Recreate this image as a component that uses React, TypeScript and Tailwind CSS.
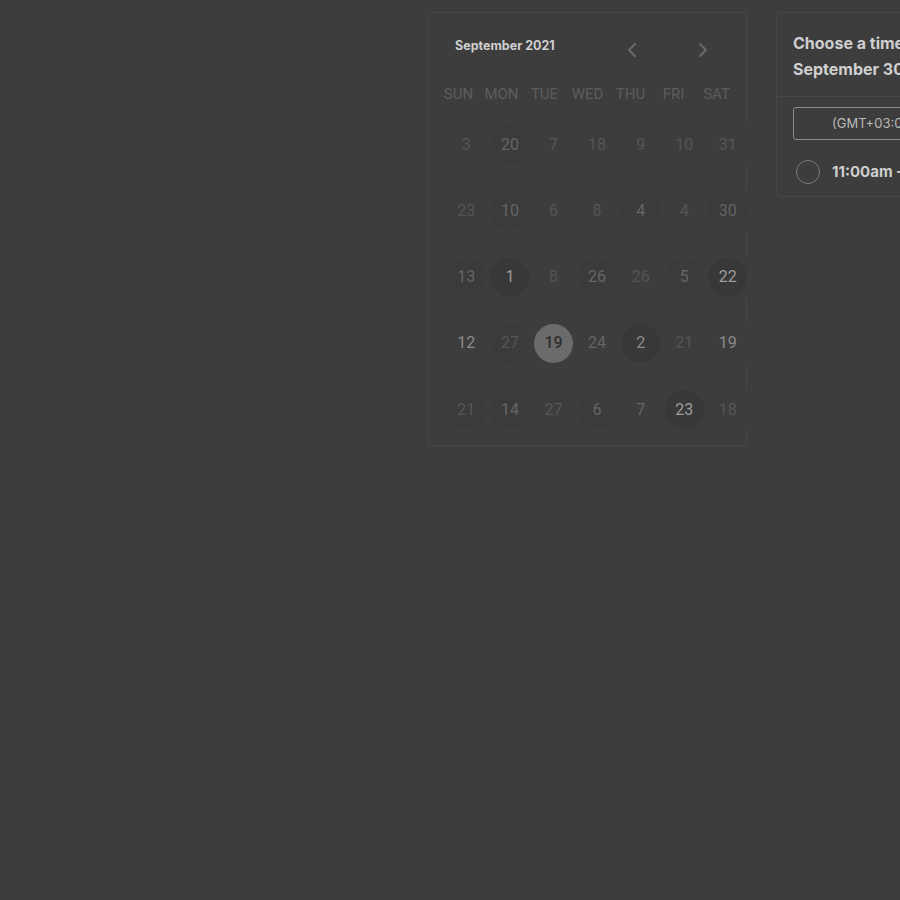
import React from "react";

type Day = { n: number; tone: string; ring?: boolean; dark?: boolean; selected?: boolean };

const HEADERS = ["SUN", "MON", "TUE", "WED", "THU", "FRI", "SAT"];

const dim = "text-[#555555]";
const mid = "text-[#656565]";
const bright = "text-[#8a8a8a]";
const brighter = "text-[#9c9c9c]";

const ROWS: Day[][] = [
  [
    { n: 3, tone: dim },
    { n: 20, tone: mid, ring: true },
    { n: 7, tone: dim },
    { n: 18, tone: dim },
    { n: 9, tone: dim },
    { n: 10, tone: dim },
    { n: 31, tone: dim },
  ],
  [
    { n: 23, tone: dim },
    { n: 10, tone: mid, ring: true },
    { n: 6, tone: dim },
    { n: 8, tone: dim },
    { n: 4, tone: mid, ring: true },
    { n: 4, tone: dim },
    { n: 30, tone: mid, ring: true },
  ],
  [
    { n: 13, tone: mid, ring: true },
    { n: 1, tone: brighter, ring: true, dark: true },
    { n: 8, tone: dim },
    { n: 26, tone: mid, ring: true },
    { n: 26, tone: dim },
    { n: 5, tone: mid, ring: true },
    { n: 22, tone: brighter, ring: true, dark: true },
  ],
  [
    { n: 12, tone: bright },
    { n: 27, tone: dim, ring: true },
    { n: 19, tone: "text-[#2f2f2f]", selected: true },
    { n: 24, tone: mid },
    { n: 2, tone: bright, ring: true, dark: true },
    { n: 21, tone: dim },
    { n: 19, tone: bright },
  ],
  [
    { n: 21, tone: dim, ring: true },
    { n: 14, tone: mid, ring: true },
    { n: 27, tone: dim },
    { n: 6, tone: mid, ring: true },
    { n: 7, tone: mid },
    { n: 23, tone: brighter, ring: true, dark: true },
    { n: 18, tone: dim },
  ],
];

function Chevron({ dir }: { dir: "left" | "right" }) {
  return (
    <svg width="10" height="16" viewBox="0 0 10 16" fill="none">
      <path
        d={dir === "left" ? "M8 2 L2 8 L8 14" : "M2 2 L8 8 L2 14"}
        stroke="#6a6a6a"
        strokeWidth="2"
        strokeLinecap="round"
        strokeLinejoin="round"
      />
    </svg>
  );
}

function DayCell({ day }: { day: Day }) {
  let circle = "";
  if (day.selected) circle = "bg-[#6b6b6b] font-medium";
  else if (day.dark) circle = "bg-[#383838]";
  else if (day.ring) circle = "bg-[#3b3b3b]";
  return (
    <div className="w-[43.6px] h-[42px] shrink-0 flex items-center justify-center bg-[#3d3d3d]">
      <div
        className={`w-[39px] h-[39px] shrink-0 rounded-full flex items-center justify-center text-[16px] ${circle} ${day.tone}`}
      >
        {day.n}
      </div>
    </div>
  );
}

export default function App() {
  return (
    <div
      className="w-full h-[900px] overflow-hidden bg-[#3d3d3d] flex items-start pl-[428px] pt-[12px] gap-[29px]"
      style={{ fontFamily: "Inter, Roboto, sans-serif" }}
    >
      {/* Calendar */}
      <div className="w-[319px] h-[434px] shrink-0 border border-[#474747] rounded-[2px]">
        <div className="flex items-center h-[58px] pl-[26px] pt-[8px]">
          <span className="text-[12.5px] font-bold text-[#cfcfcf] w-[172px]">September 2021</span>
          <div className="flex items-center gap-[61px] pt-[8px]">
            <Chevron dir="left" />
            <Chevron dir="right" />
          </div>
        </div>
        <div
          className="grid grid-cols-7 w-[301px] ml-[8px] mt-[12px] text-[15px] text-[#5c5c5c]"
          style={{ fontFamily: "Roboto, sans-serif" }}
        >
          {HEADERS.map((h) => (
            <div key={h} className="text-center">
              {h}
            </div>
          ))}
        </div>
        <div
          className="flex flex-col gap-[24.3px] ml-[15.5px] mt-[18px] w-[320px]"
          style={{ fontFamily: "Roboto, sans-serif" }}
        >
          {ROWS.map((row, i) => (
            <div key={i} className="flex">
              {row.map((d, j) => (
                <DayCell key={j} day={d} />
              ))}
            </div>
          ))}
        </div>
      </div>

      {/* Time picker */}
      <div className="w-[320px] h-[185px] shrink-0 border border-[#474747] rounded-[2px]">
        <div className="px-[16px] pt-[17px] pb-[14px] border-b border-[#474747] text-[16px] leading-[26px] font-bold text-[#cfcfcf]">
          <div>Choose a time</div>
          <div>September 30, 2021</div>
        </div>
        <div className="px-[16px] pt-[10px]">
          <div className="h-[33px] border border-[#8a8a8a] rounded-[3px] flex items-center pl-[38px] text-[13px] text-[#b8b8b8]">
            (GMT+03:00) Moscow
          </div>
          <div className="flex items-center mt-[20px] pl-[3px] gap-[12px]">
            <div className="w-[24px] h-[24px] rounded-full border-[1.5px] border-[#7a7a7a]" />
            <span className="text-[15px] font-bold text-[#cfcfcf]">11:00am - 11:30am</span>
          </div>
        </div>
      </div>
    </div>
  );
}
